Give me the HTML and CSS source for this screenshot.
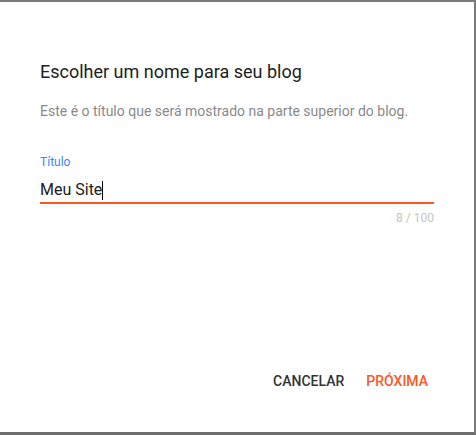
FILE: index.html
```html
<!DOCTYPE html>
<html lang="pt">
<head>
<meta charset="utf-8">
<link rel="stylesheet" href="styles.css">
</head>
<body>
<div class="dialog">
  <div class="content">
    <h1 class="title">Escolher um nome para seu blog</h1>
    <p class="desc">Este é o título que será mostrado na parte superior do blog.</p>
    <div class="field">
      <label class="label">Título</label>
      <div class="input"><span>Meu Site</span><span class="caret"></span></div>
      <div class="counter">8 / 100</div>
    </div>
  </div>
  <div class="actions">
    <button class="btn cancel">CANCELAR</button>
    <button class="btn next">PRÓXIMA</button>
  </div>
</div>
</body>
</html>
```
FILE: styles.css
```css
html, body {
  margin: 0;
  padding: 0;
  background: #fff;
}
.dialog {
  width: 476px;
  height: 435px;
  box-sizing: border-box;
  border-top: 2px solid #7b7b7b;
  border-right: 2px solid #7b7b7b;
  border-bottom: 3px solid #6e6e6e;
  background: #fff;
  font-family: Roboto, "Noto Sans", sans-serif;
  display: flex;
  flex-direction: column;
}
.content {
  padding: 58px 40px 0 40px;
  flex: 1;
}
.title {
  margin: 0;
  font-size: 18px;
  font-weight: 400;
  line-height: 24px;
  color: #212121;
}
.desc {
  margin: 17px 0 0 0;
  font-size: 14px;
  line-height: 20px;
  color: #8a8a8a;
}
.field {
  margin-top: 33px;
}
.label {
  display: block;
  font-size: 12px;
  line-height: 16px;
  color: #4285f4;
}
.input {
  margin-top: 9px;
  font-size: 16px;
  line-height: 22px;
  color: #212121;
  border-bottom: 2px solid #ff5722;
  padding-bottom: 1px;
  display: flex;
  align-items: center;
}
.caret {
  display: inline-block;
  width: 1px;
  height: 19px;
  background: #000;
}
.counter {
  margin-top: 6px;
  text-align: right;
  font-size: 12px;
  line-height: 16px;
  color: #c4c4c4;
}
.actions {
  display: flex;
  justify-content: flex-end;
  gap: 6px;
  padding: 0 38px 33px 0;
}
.btn {
  background: none;
  border: none;
  font-family: Roboto, "Noto Sans", sans-serif;
  font-size: 14px;
  font-weight: 500;
  padding: 0 8px;
  height: 36px;
  line-height: 36px;
}
.cancel { color: #333; }
.next { color: #ff5722; }
```
